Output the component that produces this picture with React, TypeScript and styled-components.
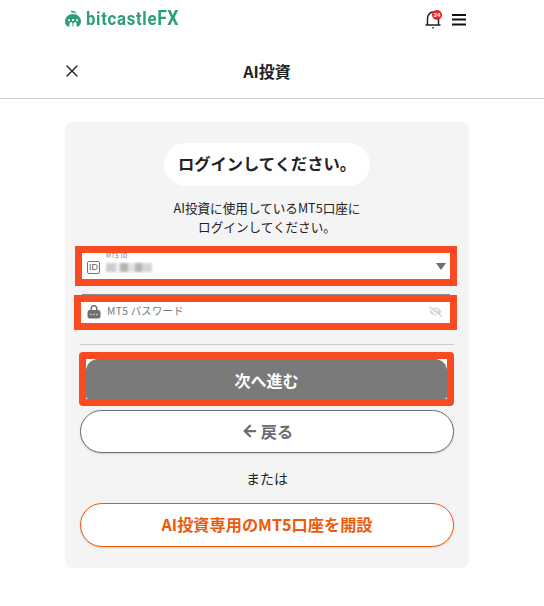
import styled, { createGlobalStyle } from 'styled-components';
import { ArrowLeft, X } from 'lucide-react';
import { FaEyeSlash } from 'react-icons/fa';

const GlobalStyle = createGlobalStyle`
  * { box-sizing: border-box; }
  body {
    margin: 0;
    background: #fff;
    color: #222;
    font-family: "Noto Sans CJK JP", "Noto Sans", sans-serif;
  }
`;

const Page = styled.div`
  width: 544px;
  height: 606px;
  overflow: hidden;
`;

const TopBar = styled.header`
  height: 40px;
  padding: 0 78px 0 65px;
  display: flex;
  align-items: center;
  justify-content: space-between;
`;

const Logo = styled.div`
  margin-top: -3px;
  display: flex;
  align-items: center;
  gap: 5px;
  color: #2c9f77;
`;

const LogoText = styled.span`
  display: block;
  font-family: Roboto, sans-serif;
  font-size: 19px;
  font-weight: 700;
  letter-spacing: 0.8px;
  line-height: 20px;
  transform: scaleX(0.88);
  transform-origin: left center;
  b { font-weight: 700; font-size: 20px; letter-spacing: 0.5px; }
`;

const TopIcons = styled.div`
  display: flex;
  align-items: center;
  gap: 10px;
`;

const BellWrap = styled.div`
  position: relative;
  width: 17px;
  height: 19px;
`;

const Badge = styled.span`
  position: absolute;
  top: -1px;
  right: 0;
  width: 10px;
  height: 10px;
  border-radius: 50%;
  background: #e8262a;
  color: #fff;
  font: 700 6px/10px "Liberation Sans", sans-serif;
  text-align: center;
`;

const TitleBar = styled.div`
  height: 59px;
  padding: 4px 0 0 62px;
  border-bottom: 1px solid #ccc;
  display: grid;
  grid-template-columns: 18px 1fr 90px;
  align-items: center;
`;

const PageTitle = styled.h1`
  margin: 0;
  font-size: 16px;
  font-weight: 700;
  line-height: 24px;
  text-align: center;
`;

const Card = styled.main`
  width: 404px;
  margin: 23px 0 0 65px;
  padding: 21px 15px 21px;
  border-radius: 8px;
  background: #f4f4f4;
  display: flex;
  flex-direction: column;
`;

const Pill = styled.h2`
  align-self: center;
  width: 206px;
  height: 43px;
  margin: 0;
  border-radius: 22px;
  background: #fff;
  font-size: 16.3px;
  font-weight: 700;
  line-height: 41px;
  text-align: center;
`;

const Lead = styled.p`
  margin: 12px 0 10px;
  font-size: 12.6px;
  line-height: 19px;
  text-align: center;
`;

const Marked = styled.div<{ $left: number; $right: number; $radius?: number }>`
  position: relative;
  margin: 0 ${p => p.$right}px 0 ${p => p.$left}px;
  border: 7px solid #f94a22;
  border-radius: ${p => p.$radius ?? 0}px;
  background: #fff;
`;

const Field = styled.div<{ $height: number; $lift?: number }>`
  height: ${p => p.$height}px;
  display: flex;
  align-items: center;
  padding: 0 4px ${p => p.$lift ?? 0}px 5px;
`;

const IdIcon = styled.span`
  width: 13px;
  height: 13px;
  margin-top: 2px;
  border: 1px solid #777;
  border-radius: 2px;
  color: #666;
  font: 400 9px/11px "Liberation Sans", sans-serif;
  text-align: center;
`;

const IdValue = styled.div`
  margin-left: 6px;
  display: flex;
  flex-direction: column;
`;

const IdLabel = styled.span`
  margin-top: -9px;
  font-size: 6px;
  line-height: 8px;
  color: #777;
  letter-spacing: 0.4px;
`;

const Smudge = styled.div`
  width: 46px;
  height: 9px;
  margin-top: 3px;
  filter: blur(1.2px);
  background: linear-gradient(90deg, #ccc 0 22%, #f0f0f0 22% 30%, #b4b4b4 30% 48%, #e2e2e2 48% 62%, #b4b4b4 62% 78%, #d6d6d6 78% 100%);
`;

const Caret = styled.span`
  margin-left: auto;
  width: 0;
  height: 0;
  border-left: 5px solid transparent;
  border-right: 5px solid transparent;
  border-top: 7px solid #6e6e6e;
`;

const PasswordMark = styled(Marked)`
  margin-top: 9px;
  &::before {
    content: '';
    position: absolute;
    top: -8px;
    left: 1px;
    right: 0;
    height: 1px;
    background: #8a8a8a;
  }
`;

const LockSlot = styled.span`
  margin-left: 1px;
  display: flex;
`;

const Placeholder = styled.span`
  margin-left: 6px;
  font-size: 10.3px;
  line-height: 14px;
  letter-spacing: 0.3px;
  color: #777;
`;

const EyeSlot = styled.span`
  margin-left: auto;
  margin-right: 4px;
  display: flex;
  color: #d2d2d2;
`;

const Divider = styled.hr`
  width: 100%;
  margin: 14px 0 7px;
  border: 0;
  border-top: 1px solid #ccc;
`;

const NextButton = styled.button`
  display: block;
  width: 100%;
  height: 40px;
  padding: 2px 0 0;
  border: 0;
  border-radius: 12px 12px 3px 3px;
  background: #7a7a7a;
  color: #fff;
  font: 700 16px/38px "Noto Sans CJK JP", sans-serif;
`;

const PillButton = styled.button<{ $tone: string }>`
  width: 100%;
  padding: 0 0 2px;
  border: 1px solid ${p => p.$tone};
  border-radius: 22px;
  background: #fff;
  color: ${p => p.$tone};
  display: flex;
  align-items: center;
  justify-content: center;
  gap: 2px;
  box-shadow: 0 1px 2px rgba(0, 0, 0, 0.15);
  font-family: "Noto Sans CJK JP", sans-serif;
  font-size: 16.2px;
  font-weight: 700;
`;

const BackButton = styled(PillButton)`
  height: 43px;
  margin-top: 4px;
`;

const OpenButton = styled(PillButton)`
  height: 44px;
`;

const Or = styled.p`
  margin: 15px 0 14px;
  font-size: 14px;
  line-height: 21px;
  text-align: center;
`;

export default function App() {
  return (
    <Page>
      <GlobalStyle />
      <TopBar>
        <Logo>
          <svg width="16" height="17" viewBox="0 0 16 17" fill="currentColor">
            <path d="M6 0.500L10 1.500 12 3.500 8 2.500 6.500 3z" />
            <path fillRule="evenodd" d="M8 4c4.500 0 8 3.500 8 7 0 2.500-1 4.500-2.500 5.500H11.500v-3a1.500 1.500 0 0 0-3 0v3h-1v-3a1.500 1.500 0 0 0-3 0v3H2.500C1 15.500 0 13.500 0 11c0-3.500 3.500-7 8-7zM3 9.500h2v1.500H3zM7 9h2v2H7zM11 9.500h2v1.500h-2z" />
          </svg>
          <LogoText>bitcastle<b>FX</b></LogoText>
        </Logo>
        <TopIcons>
          <BellWrap>
            <svg width="17" height="19" viewBox="0 0 17 19" fill="none" stroke="#222" strokeWidth="1.500">
              <path d="M0.500 14h15M2.500 14V8C2.500 4 5 1 8 1s5.500 3 5.500 7v6" />
              <path d="M8 16v1.500" />
            </svg>
            <Badge>24</Badge>
          </BellWrap>
          <svg width="14" height="12" viewBox="0 0 14 12" stroke="#111" strokeWidth="1.800">
            <path d="M0 1h14M0 5.500h14M0 10.500h14" />
          </svg>
        </TopIcons>
      </TopBar>
      <TitleBar>
        <X size={20} color="#222" strokeWidth={1.600} />
        <PageTitle>AI投資</PageTitle>
      </TitleBar>
      <Card>
        <Pill>ログインしてください。</Pill>
        <Lead>
          AI投資に使用しているMT5口座に
          <br />
          ログインしてください。
        </Lead>
        <Marked $left={-5} $right={-3}>
          <Field $height={26}>
            <IdIcon>ID</IdIcon>
            <IdValue>
              <IdLabel>MT5 ID</IdLabel>
              <Smudge />
            </IdValue>
            <Caret />
          </Field>
        </Marked>
        <PasswordMark $left={-6} $right={-3}>
          <Field $height={21} $lift={3}>
            <LockSlot>
              <svg width="14" height="15" viewBox="0 0 14 15" fill="#6f6f6f">
                <path d="M3.500 6V4.500a3.500 3.500 0 0 1 7 0V6H9V4.500a2 2 0 0 0-4 0V6z" />
                <rect x="0.500" y="6" width="13" height="8.500" rx="2.500" />
                <circle cx="4" cy="10.500" r=".7" fill="#fff" />
                <circle cx="7" cy="10.500" r=".7" fill="#fff" />
                <circle cx="10" cy="10.500" r=".7" fill="#fff" />
              </svg>
            </LockSlot>
            <Placeholder>MT5 パスワード</Placeholder>
            <EyeSlot>
              <FaEyeSlash size={13} />
            </EyeSlot>
          </Field>
        </PasswordMark>
        <Divider />
        <Marked $left={-1} $right={0} $radius={4}>
          <NextButton>次へ進む</NextButton>
        </Marked>
        <BackButton $tone="#6b6b76">
          <ArrowLeft size={18} strokeWidth={3} />
          戻る
        </BackButton>
        <Or>または</Or>
        <OpenButton $tone="#ee5a0a">AI投資専用のMT5口座を開設</OpenButton>
      </Card>
    </Page>
  );
}
